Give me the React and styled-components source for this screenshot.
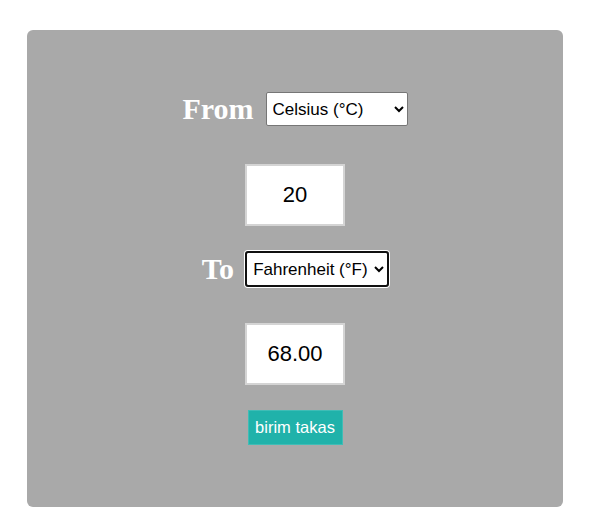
import React, { useState } from "react";
import styled, { createGlobalStyle } from "styled-components";

const GlobalStyle = createGlobalStyle`
body{
  margin:0;
  background:white;
  font-family:"Liberation Sans", Arial, sans-serif;
}
`;

const Page = styled.div`
padding:30px 27px 24px;
`;

const Card = styled.div`
display:flex;
flex-direction:column;
align-items:center;
background:#a9a9a9;
border-radius:6px;
padding:61px 0 62px;
`;

const Row = styled.div`
display:flex;
flex-direction:row;
align-items:center;
height:36px;
gap:12px;
margin-bottom:${(props) => props.space}px;
`;

const Label = styled.span`
font-family:"Liberation Serif", "Times New Roman", serif;
font-weight:bold;
font-size:30px;
color:white;
`;

const UnitSelect = styled.select`
box-sizing:border-box;
font-family:"Liberation Sans", Arial, sans-serif;
font-size:17px;
color:black;
background:white;
width:142px;
height:34px;
padding:0 2px;
border:1px solid #767676;
border-radius:2px;
outline:${(props) => (props.focused ? "2px solid #101010" : "none")};
outline-offset:-1px;
box-shadow:${(props) => (props.focused ? "0 0 0 2px white" : "none")};
`;

const ValueInput = styled.input`
box-sizing:border-box;
width:100px;
height:62px;
border:2px solid #d4d4d4;
background:white;
text-align:center;
font-family:"Liberation Sans", Arial, sans-serif;
font-size:22px;
color:black;
margin-bottom:25px;
outline:none;
`;

const SwapButton = styled.button`
box-sizing:border-box;
background:#20b2aa;
color:white;
border:1px solid #3fbdb6;
font-family:"Liberation Sans", Arial, sans-serif;
font-size:16.5px;
width:95px;
height:35px;
padding:0;
cursor:pointer;
`;

const units = ["Celsius (°C)", "Fahrenheit (°F)", "Kelvin (K)"];

const App = () => {
  const [from, setFrom] = useState("Celsius (°C)");
  const [to, setTo] = useState("Fahrenheit (°F)");
  const [value, setValue] = useState("20");
  return (
    <Page>
      <GlobalStyle />
      <Card>
        <Row space={37}>
          <Label>From</Label>
          <UnitSelect value={from} onChange={(e) => setFrom(e.target.value)}>
            {units.map((u) => (
              <option key={u}>{u}</option>
            ))}
          </UnitSelect>
        </Row>
        <ValueInput value={value} onChange={(e) => setValue(e.target.value)} />
        <Row space={36}>
          <Label>To</Label>
          <UnitSelect focused value={to} onChange={(e) => setTo(e.target.value)}>
            {units.map((u) => (
              <option key={u}>{u}</option>
            ))}
          </UnitSelect>
        </Row>
        <ValueInput readOnly value="68.00" />
        <SwapButton onClick={() => { setFrom(to); setTo(from); }}>birim takas</SwapButton>
      </Card>
    </Page>
  );
};

export default App;
